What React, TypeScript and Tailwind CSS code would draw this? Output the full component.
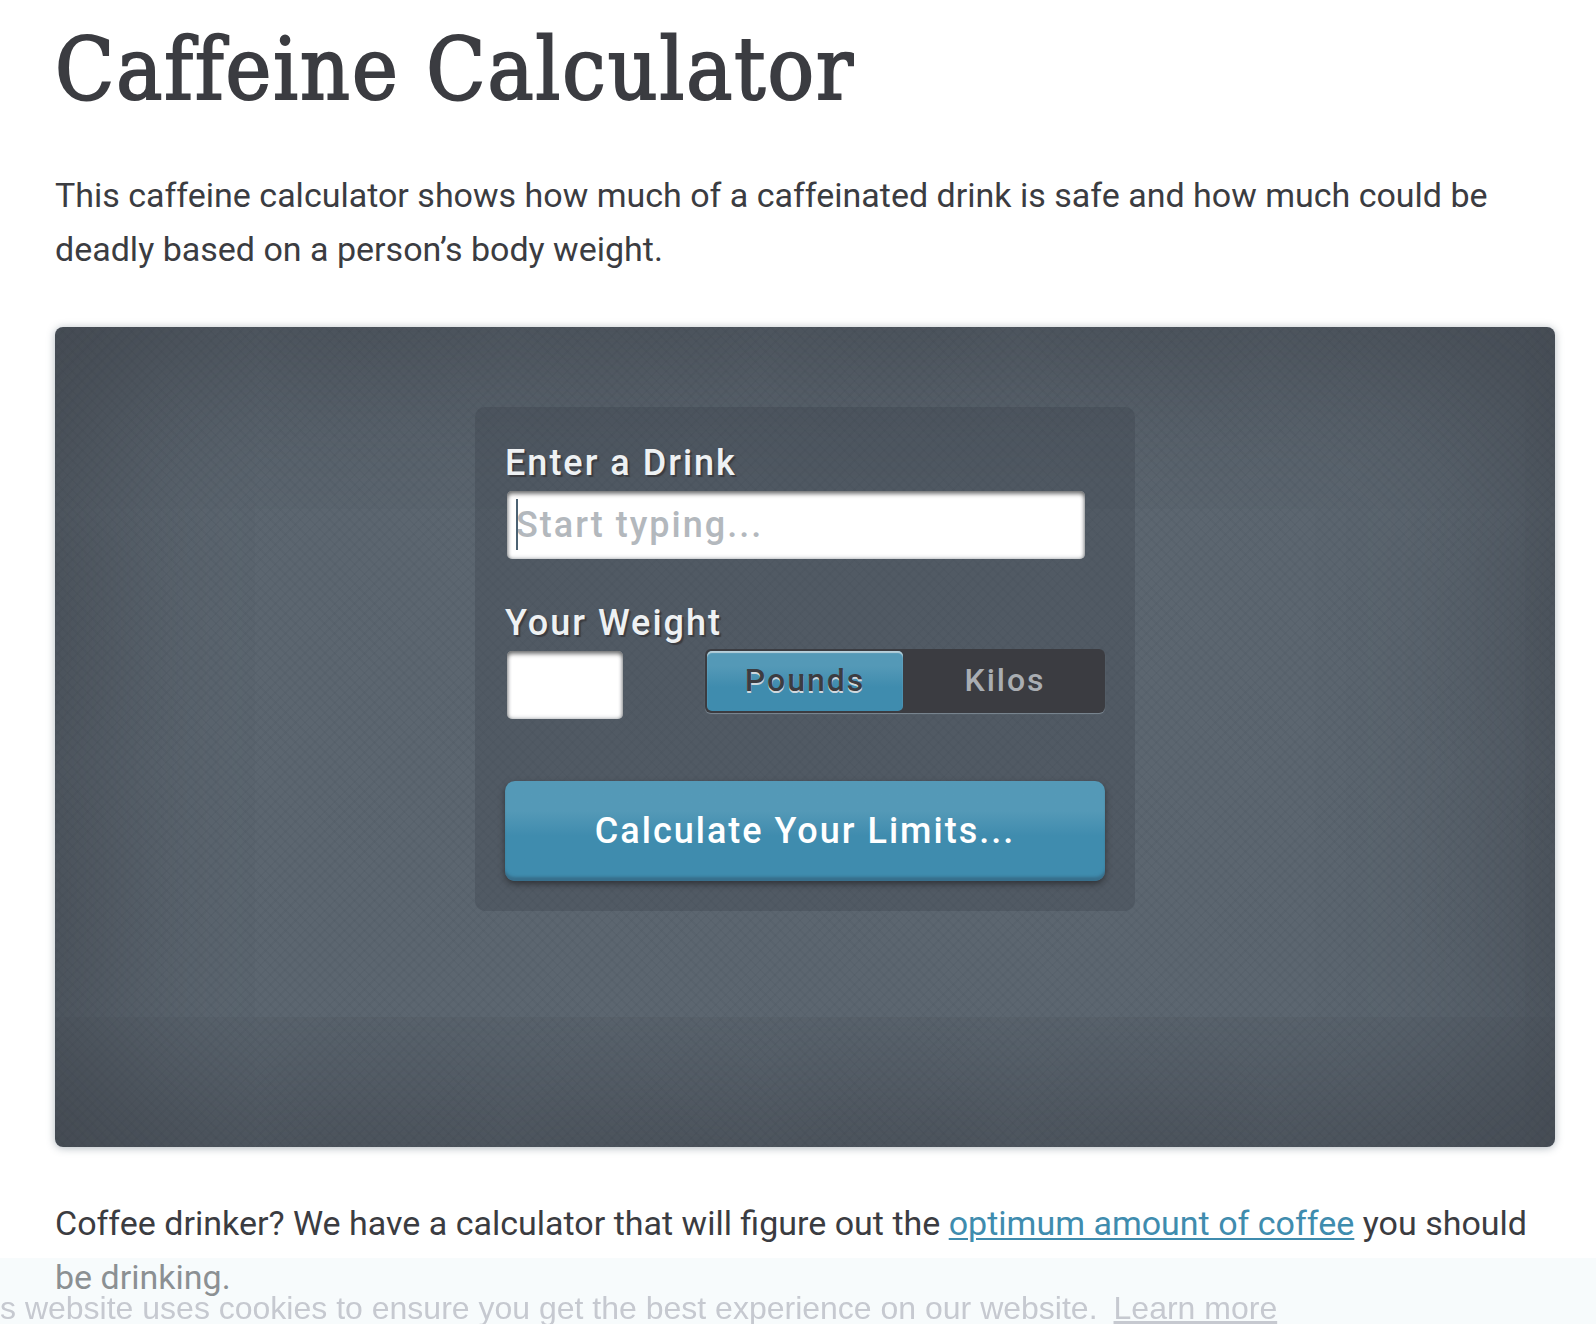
import { useState } from "react";

type Unit = "pounds" | "kilos";

const UNITS: { id: Unit; label: string }[] = [
  { id: "pounds", label: "Pounds" },
  { id: "kilos", label: "Kilos" },
];

const labelClass =
  "block text-[36px] leading-[48px] font-medium tracking-[2px] text-[#eef1f3] [text-shadow:2px_2px_1px_#3b3c41]";

const fieldClass =
  "block h-[68px] rounded-[5px] bg-white text-[36px] font-medium tracking-[2px] text-[#3b3c41] caret-[#4b6273] outline-none placeholder:text-[#b3b8bd] placeholder:opacity-100 shadow-[inset_0_3px_4px_rgba(50,50,50,0.6),inset_0_0_4px_rgba(60,70,80,0.5)]";

function DrinkField() {
  const [drink, setDrink] = useState("");
  return (
    <div>
      <label htmlFor="drink" className={labelClass}>
        Enter a Drink
      </label>
      <div className="relative mx-0.5 mt-1">
        <input
          id="drink"
          type="text"
          placeholder="Start typing..."
          value={drink}
          onChange={(e) => setDrink(e.target.value)}
          className={`${fieldClass} w-[578px] px-[9px]`}
        />
        {drink === "" && (
          <span className="absolute top-2 left-[9px] h-[51px] w-0.5 bg-[#4b6273]" aria-hidden="true" />
        )}
      </div>
    </div>
  );
}

function UnitSwitch({ unit, onChange }: { unit: Unit; onChange: (u: Unit) => void }) {
  return (
    <div
      role="radiogroup"
      aria-label="Weight unit"
      className="grid h-16 w-[400px] grid-cols-2 rounded-[6px] bg-[#3b3c41] shadow-[0_1px_1px_rgba(170,185,195,0.5)]"
    >
      {UNITS.map((u) => {
        const active = u.id === unit;
        return (
          <label
            key={u.id}
            className={
              active
                ? "relative m-0.5 flex items-center justify-center rounded-[5px] bg-linear-to-b from-[#5499b7] from-25% to-[#3f8cae] to-60% pb-0.5 text-[32px] leading-[48px] font-medium tracking-[2px] text-[#3b3c41] [text-shadow:0_2px_0_#cfd8de] shadow-[inset_0_2px_1px_rgba(215,225,230,0.75)]"
                : "relative flex items-center justify-center pb-0.5 text-[32px] leading-[48px] font-medium tracking-[2px] text-[#a9adb2]"
            }
          >
            <input
              type="radio"
              name="unit"
              value={u.id}
              checked={active}
              onChange={() => onChange(u.id)}
              className="sr-only"
            />
            {u.label}
          </label>
        );
      })}
    </div>
  );
}

function Calculator() {
  const [weight, setWeight] = useState("");
  const [unit, setUnit] = useState<Unit>("pounds");
  return (
    <form
      onSubmit={(e) => e.preventDefault()}
      className="mx-auto w-full max-w-[660px] rounded-[10px] bg-[rgba(56,62,74,0.3)] px-[30px] pt-8 pb-[30px]"
    >
      <DrinkField />
      <div className="mt-10">
        <label htmlFor="weight" className={labelClass}>
          Your Weight
        </label>
        <div className="mt-0.5 flex items-start justify-between">
          <input
            id="weight"
            type="text"
            inputMode="numeric"
            value={weight}
            onChange={(e) => setWeight(e.target.value)}
            className={`${fieldClass} mt-0.5 ml-0.5 w-[116px] px-[9px]`}
          />
          <UnitSwitch unit={unit} onChange={setUnit} />
        </div>
      </div>
      <button
        type="submit"
        className="mt-[62px] block h-[100px] w-full rounded-[10px] bg-linear-to-b from-[#5499b7] from-30% to-[#3f8cae] to-55% text-[36px] font-medium tracking-[2px] text-white shadow-[inset_0_-5px_3px_-1px_rgba(50,90,115,0.6),0_3px_6px_rgba(40,42,46,0.8)]"
      >
        Calculate Your Limits...
      </button>
    </form>
  );
}

function CookieBar() {
  return (
    <div className="fixed inset-x-0 bottom-0 h-[66px] overflow-hidden bg-[rgba(238,246,249,0.45)] pt-[31px] font-['Liberation_Sans',Arial,sans-serif] text-[32px] leading-[38px] whitespace-nowrap text-[#c6c9d0]">
      <span>s website uses cookies to ensure you get the best experience on our website.</span>
      <a href="#cookies" className="ml-4 underline">
        Learn more
      </a>
    </div>
  );
}

export default function App() {
  return (
    <main className="min-h-screen bg-white pr-[41px] pl-[55px] font-[Roboto,sans-serif] text-[34px] leading-[54px] text-[#3b3c41]">
      <h1 className="pt-4 font-['DejaVu_Serif_Condensed','DejaVu_Serif',serif] text-[86px] leading-[106px] tracking-[2px] [-webkit-text-stroke:2px_#3b3c41]">
        Caffeine Calculator
      </h1>
      <p className="mt-[46px]">
        This caffeine calculator shows how much of a caffeinated drink is safe and how much could be
        deadly based on a person’s body weight.
      </p>
      {/* woven texture under the vignette */}
      <section className="mt-[51px] min-h-[820px] rounded-[8px] bg-[#5c6670] bg-[repeating-linear-gradient(45deg,rgba(50,62,72,0.08)_0_2px,transparent_2px_7px),repeating-linear-gradient(-45deg,rgba(50,62,72,0.08)_0_2px,transparent_2px_7px)] pt-20 shadow-[inset_0_0_200px_rgba(44,46,52,0.8),0_1px_8px_rgba(60,80,95,0.4)]">
        <Calculator />
      </section>
      <p className="mt-[49px]">
        Coffee drinker? We have a calculator that will figure out the{" "}
        <a
          href="#optimum"
          className="text-[#3f8cae] underline decoration-2 underline-offset-3"
        >
          optimum amount of coffee
        </a>{" "}
        you should be drinking.
      </p>
      <CookieBar />
    </main>
  );
}
